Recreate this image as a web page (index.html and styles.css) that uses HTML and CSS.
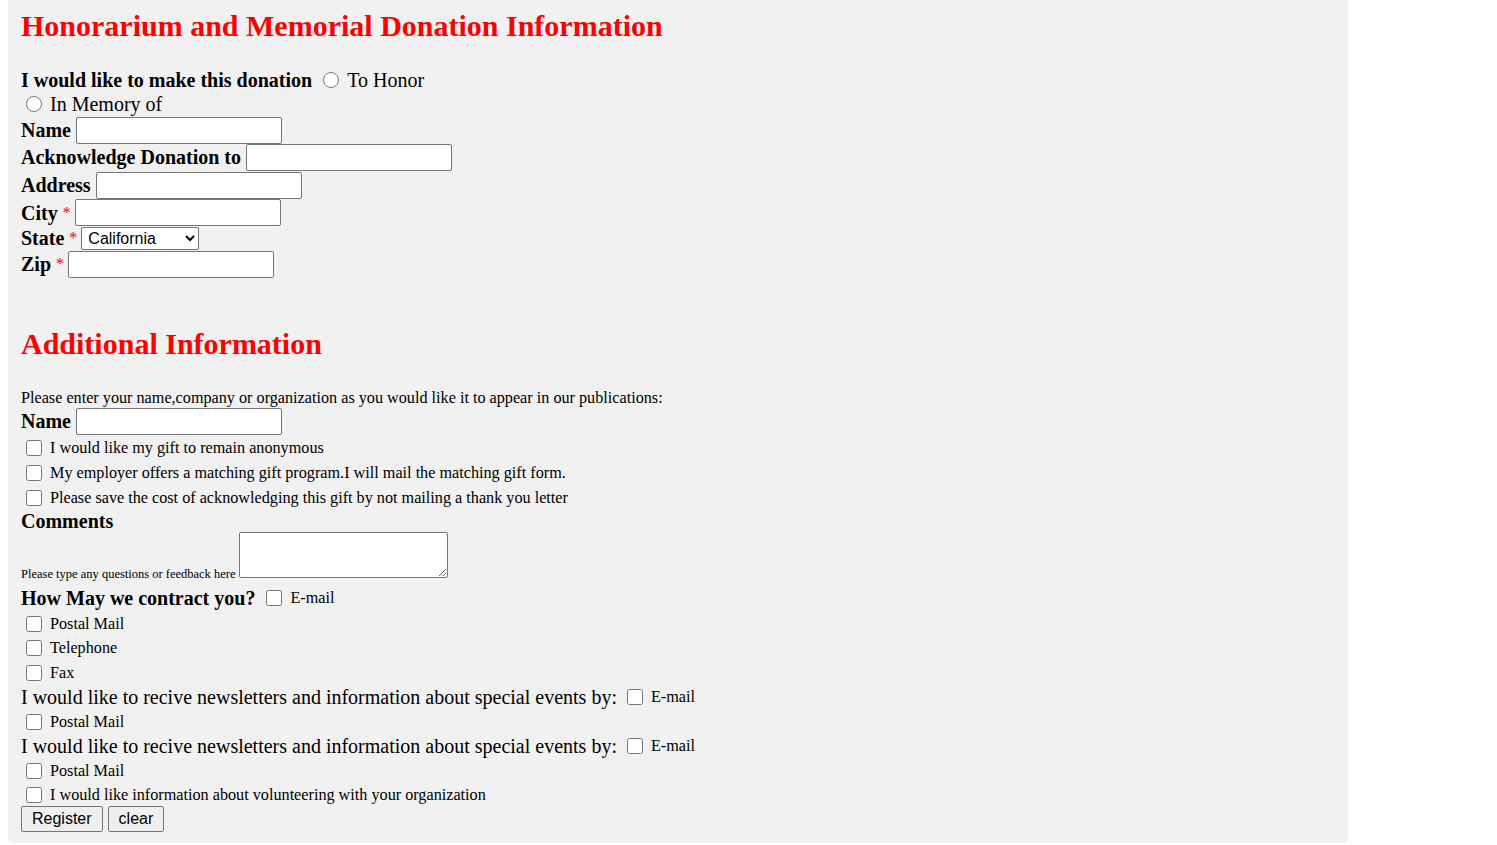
FILE: index.html
```html
<!DOCTYPE html>
<html lang="en">
<head>
<meta charset="utf-8">
<title>Honorarium and Memorial Donation Information</title>
<link rel="stylesheet" href="styles.css">
</head>
<body>
<form class="panel">
  <h1 class="title">Honorarium and Memorial Donation Information</h1>

  <div class="row row-donation">
    <span class="lbl">I would like to make this donation</span>
    <input type="radio" name="kind" class="radio radio-inline">
    <span class="opt">To Honor</span>
  </div>
  <div class="row row-memory">
    <input type="radio" name="kind" class="radio">
    <span class="opt">In Memory of</span>
  </div>

  <div class="row h28"><span class="lbl">Name</span><input type="text" class="field"></div>
  <div class="row h27"><span class="lbl">Acknowledge Donation to</span><input type="text" class="field"></div>
  <div class="row h28"><span class="lbl">Address</span><input type="text" class="field"></div>
  <div class="row h27"><span class="lbl">City <span class="req">*</span></span><input type="text" class="field field-req"></div>
  <div class="row h24"><span class="lbl">State <span class="req">*</span></span>
    <select class="state">
      <option>California</option>
      <option>Nevada</option>
      <option>Oregon</option>
    </select>
  </div>
  <div class="row h28"><span class="lbl">Zip <span class="req">*</span></span><input type="text" class="field field-req"></div>

  <h2 class="title title-2">Additional Information</h2>

  <p class="note">Please enter your name,company or organization as you would like it to appear in our publications:</p>
  <div class="row h28"><span class="lbl">Name</span><input type="text" class="field"></div>

  <div class="row h25"><input type="checkbox" class="check"><span class="small-opt">I would like my gift to remain anonymous</span></div>
  <div class="row h26"><input type="checkbox" class="check"><span class="small-opt">My employer offers a matching gift program.I will mail the matching gift form.</span></div>
  <div class="row h24"><input type="checkbox" class="check"><span class="small-opt">Please save the cost of acknowledging this gift by not mailing a thank you letter</span></div>

  <div class="row h22"><span class="lbl">Comments</span></div>
  <div class="row row-comments">
    <span class="tiny">Please type any questions or feedback here</span>
    <textarea class="comments"></textarea>
  </div>

  <div class="row row-contact"><span class="lbl">How May we contract you?</span><input type="checkbox" class="check check-inline"><span class="small-opt">E-mail</span></div>
  <div class="row h25"><input type="checkbox" class="check"><span class="small-opt">Postal Mail</span></div>
  <div class="row h24"><input type="checkbox" class="check"><span class="small-opt">Telephone</span></div>
  <div class="row h25"><input type="checkbox" class="check"><span class="small-opt">Fax</span></div>

  <div class="row h24"><span class="big">I would like to recive newsletters and information about special events by:</span><input type="checkbox" class="check check-inline"><span class="small-opt">E-mail</span></div>
  <div class="row h25"><input type="checkbox" class="check"><span class="small-opt">Postal Mail</span></div>
  <div class="row h24"><span class="big">I would like to recive newsletters and information about special events by:</span><input type="checkbox" class="check check-inline"><span class="small-opt">E-mail</span></div>
  <div class="row h26"><input type="checkbox" class="check"><span class="small-opt">Postal Mail</span></div>
  <div class="row h22"><input type="checkbox" class="check"><span class="small-opt">I would like information about volunteering with your organization</span></div>

  <div class="actions">
    <button type="submit" class="btn">Register</button>
    <button type="reset" class="btn">clear</button>
  </div>
</form>
</body>
</html>
```

FILE: styles.css
```css
html, body {
  background: #ffffff;
}

body {
  margin: 0 8px;
  font-family: "Liberation Serif", "Times New Roman", serif;
  color: #000000;
}

.panel {
  box-sizing: border-box;
  width: 1340px;
  background: #f1f1f1;
  padding: 9px 13px 11px 13px;
  border-radius: 0 0 6px 6px;
}

.title {
  margin: 0;
  font-size: 30px;
  line-height: 34px;
  font-weight: bold;
  color: #ff0000;
}

.title-2 {
  margin-top: 49px;
}

.row {
  display: flex;
  align-items: center;
  white-space: nowrap;
}

.row-donation {
  margin-top: 25px;
  height: 24px;
}

.row-memory {
  height: 24px;
}

.h22 { height: 22px; }
.h24 { height: 24px; }
.h25 { height: 25px; }
.h26 { height: 26px; }
.h27 { height: 27px; }
.h28 { height: 28px; }

.lbl {
  font-size: 20px;
  font-weight: bold;
  line-height: 23px;
}

.req {
  color: #ff0000;
  font-weight: normal;
  font-size: 16px;
  vertical-align: 2px;
}

.opt {
  font-size: 20px;
  line-height: 23px;
}

.big {
  font-size: 20px;
  line-height: 23px;
}

.small-opt {
  font-size: 16.2px;
  line-height: 18px;
  margin-left: 8px;
}

.tiny {
  font-size: 12.5px;
  line-height: 15px;
}

.note {
  margin: 28px 0 0 0;
  font-size: 16.2px;
  line-height: 18px;
}

.radio {
  width: 16px;
  height: 16px;
  margin: 0 3px 0 5px;
}

.radio-inline {
  margin-left: 11px;
}

.radio + .opt {
  margin-left: 5px;
}

.field {
  box-sizing: border-box;
  width: 206px;
  height: 27px;
  margin: 0 0 0 5px;
  border: 1px solid #767676;
  border-radius: 2px;
  background: #ffffff;
  font-family: "Liberation Sans", Arial, sans-serif;
  font-size: 16px;
}

.field-req {
  margin-left: 4px;
}

.state {
  box-sizing: border-box;
  width: 118px;
  height: 23px;
  margin: 0 0 0 4px;
  padding: 0 2px;
  border: 1px solid #767676;
  border-radius: 2px;
  background: #ffffff;
  color: #000000;
  font-family: "Liberation Sans", Arial, sans-serif;
  font-size: 16px;
}

.check {
  width: 16px;
  height: 16px;
  margin: 0 0 0 5px;
}

.check-inline {
  margin-left: 11px;
}

.big + .check-inline {
  margin-left: 10px;
}

.row-comments {
  align-items: flex-end;
  height: 48px;
}

.row-comments .tiny {
  margin-bottom: -2px;
}

.comments {
  box-sizing: border-box;
  width: 209px;
  height: 46px;
  margin: 0 0 2px 3px;
  border: 1px solid #767676;
  border-radius: 2px;
  background: #ffffff;
}

.row-contact {
  margin-top: 5px;
  height: 26px;
}

.actions {
  display: flex;
  gap: 5px;
  height: 26px;
}

.btn {
  box-sizing: border-box;
  height: 26px;
  margin: 0;
  padding: 0 10px;
  border: 1px solid #767676;
  border-radius: 2px;
  background: #efefef;
  color: #000000;
  font-family: "Liberation Sans", Arial, sans-serif;
  font-size: 16px;
}
```
